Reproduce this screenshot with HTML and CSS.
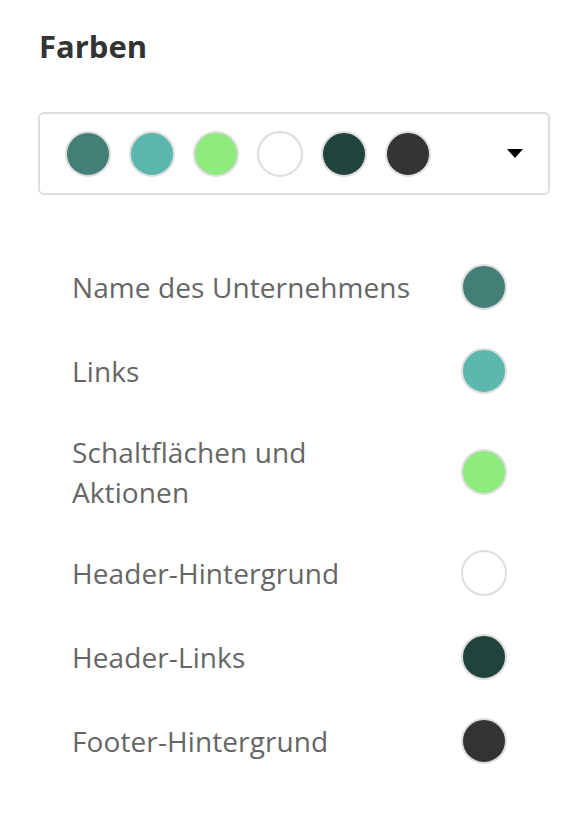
FILE: index.html
```html
<!DOCTYPE html>
<html lang="de">
<head>
<meta charset="utf-8">
<link rel="stylesheet" href="styles.css">
</head>
<body>
<div class="panel">
  <h2 class="title">Farben</h2>
  <div class="select">
    <div class="swatches">
      <span class="dot" style="background:#437f76"></span>
      <span class="dot" style="background:#5cb8ae"></span>
      <span class="dot" style="background:#8eeb7e"></span>
      <span class="dot" style="background:#ffffff"></span>
      <span class="dot" style="background:#20433b"></span>
      <span class="dot" style="background:#333333"></span>
    </div>
    <span class="caret"></span>
  </div>
  <ul class="list">
    <li class="row"><span class="label">Name des Unternehmens</span><span class="dot" style="background:#437f76"></span></li>
    <li class="row"><span class="label">Links</span><span class="dot" style="background:#5cb8ae"></span></li>
    <li class="row"><span class="label">Schaltflächen und<br>Aktionen</span><span class="dot" style="background:#8eeb7e"></span></li>
    <li class="row"><span class="label">Header-Hintergrund</span><span class="dot" style="background:#ffffff"></span></li>
    <li class="row"><span class="label">Header-Links</span><span class="dot" style="background:#20433b"></span></li>
    <li class="row"><span class="label">Footer-Hintergrund</span><span class="dot" style="background:#333333"></span></li>
  </ul>
</div>
</body>
</html>
```

FILE: styles.css
```css
html, body {
  margin: 0;
  padding: 0;
  background: #ffffff;
}
body {
  font-family: "Open Sans", Lato, sans-serif;
  color: #333333;
}
.panel {
  padding: 24px 38px 0 38px;
}
.title {
  margin: 0 0 0 1px;
  font-size: 31px;
  line-height: 44px;
  font-weight: 700;
  color: #333333;
}
.select {
  margin-top: 44px;
  height: 83px;
  box-sizing: border-box;
  border: 2px solid #dddddd;
  border-radius: 6px;
  display: flex;
  align-items: center;
  justify-content: space-between;
  padding: 0 25px 0 25px;
}
.swatches {
  display: flex;
  gap: 18px;
}
.dot {
  width: 46px;
  height: 46px;
  box-sizing: border-box;
  border: 2px solid #dddddd;
  border-radius: 50%;
  flex: none;
  display: block;
}
.caret {
  width: 0;
  height: 0;
  border-left: 8px solid transparent;
  border-right: 8px solid transparent;
  border-top: 9px solid #000000;
}
.list {
  list-style: none;
  margin: 69px 43px 0 34px;
  padding: 0;
  display: flex;
  flex-direction: column;
  gap: 38px;
}
.row {
  display: flex;
  align-items: center;
  justify-content: space-between;
  min-height: 46px;
}
.label {
  font-size: 28px;
  line-height: 40px;
  color: #666666;
  letter-spacing: 0.1px;
}
```
